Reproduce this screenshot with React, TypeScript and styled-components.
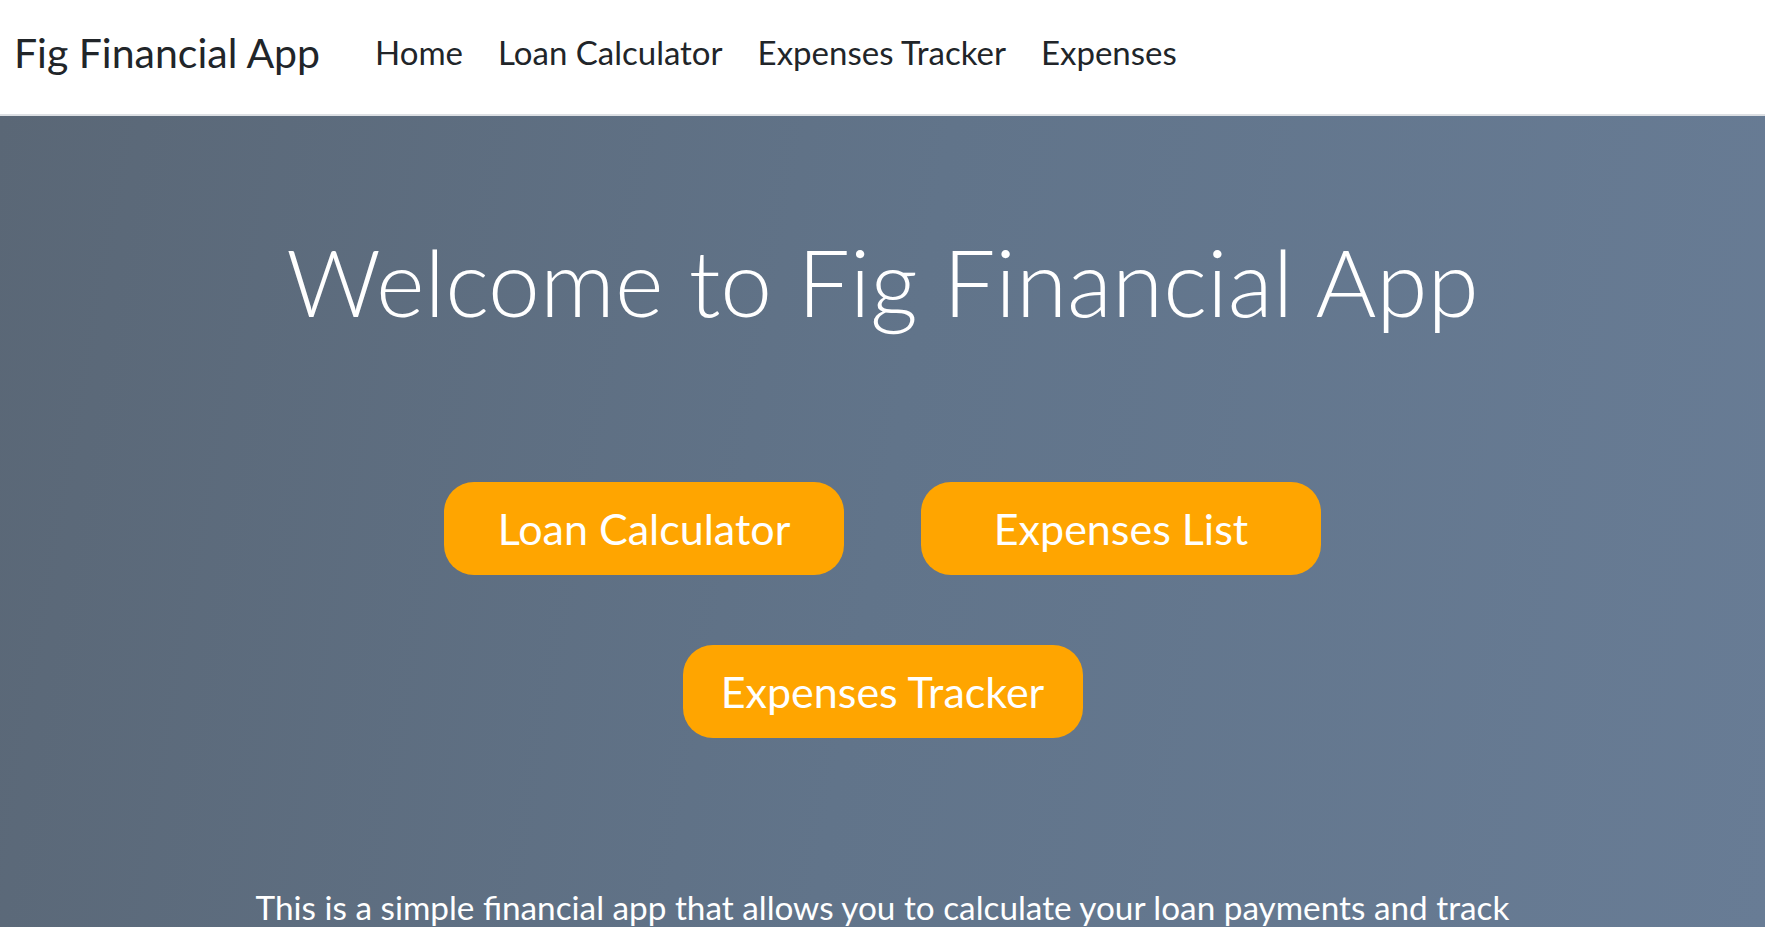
import React from "react";
import styled, { createGlobalStyle } from "styled-components";

const GlobalStyle = createGlobalStyle`
  html, body {
    margin: 0;
    padding: 0;
  }
  body {
    font-family: Lato, "Open Sans", sans-serif;
    color: #212529;
    background: #ffffff;
    overflow: hidden;
  }
  * { box-sizing: border-box; }
`;

const Page = styled.div`
  display: flex;
  flex-direction: column;
  width: 100%;
  height: 927px;
`;

const NavBar = styled.nav`
  display: flex;
  align-items: center;
  height: 116px;
  padding: 0 0 10px 14px;
  background: #ffffff;
  border-bottom: 2px solid #dcdfe3;
  flex-shrink: 0;
`;

const Brand = styled.a`
  font-size: 41px;
  line-height: 1;
  color: #212529;
  text-decoration: none;
  margin-right: 55px;
  white-space: nowrap;
`;

const NavList = styled.div`
  display: flex;
  align-items: center;
  gap: 35px;
`;

const NavLink = styled.a`
  font-size: 33px;
  line-height: 1;
  color: #212529;
  text-decoration: none;
  white-space: nowrap;
`;

const Hero = styled.main`
  flex: 1;
  display: flex;
  flex-direction: column;
  align-items: center;
  background: linear-gradient(100deg, #5a6776 0%, #61748a 50%, #687c95 100%);
  color: #ffffff;
`;

const Title = styled.h1`
  margin: 119px 0 0;
  font-size: 93px;
  font-weight: 300;
  line-height: 1;
  white-space: nowrap;
`;

const ButtonRow = styled.div<{ $top: number }>`
  display: flex;
  justify-content: center;
  gap: 77px;
  margin-top: ${(p) => p.$top}px;
`;

const ActionButton = styled.button`
  width: 400px;
  height: 93px;
  border: none;
  border-radius: 30px;
  background: #ffa500;
  color: #ffffff;
  font-family: Lato, "Open Sans", sans-serif;
  font-size: 43px;
  line-height: 1;
  cursor: pointer;
  display: flex;
  align-items: center;
  justify-content: center;
`;

const Intro = styled.p`
  margin: 148px 0 0;
  font-size: 33.3px;
  line-height: 1.3;
  text-align: center;
  white-space: nowrap;
`;

export default function App() {
  return (
    <>
      <GlobalStyle />
      <Page>
        <NavBar>
          <Brand href="#">Fig Financial App</Brand>
          <NavList>
            <NavLink href="#">Home</NavLink>
            <NavLink href="#">Loan Calculator</NavLink>
            <NavLink href="#">Expenses Tracker</NavLink>
            <NavLink href="#">Expenses</NavLink>
          </NavList>
        </NavBar>
        <Hero>
          <Title>Welcome to Fig Financial App</Title>
          <ButtonRow $top={154}>
            <ActionButton>Loan Calculator</ActionButton>
            <ActionButton>Expenses List</ActionButton>
          </ButtonRow>
          <ButtonRow $top={70}>
            <ActionButton>Expenses Tracker</ActionButton>
          </ButtonRow>
          <Intro>
            This is a simple financial app that allows you to calculate your loan payments and track
          </Intro>
        </Hero>
      </Page>
    </>
  );
}
